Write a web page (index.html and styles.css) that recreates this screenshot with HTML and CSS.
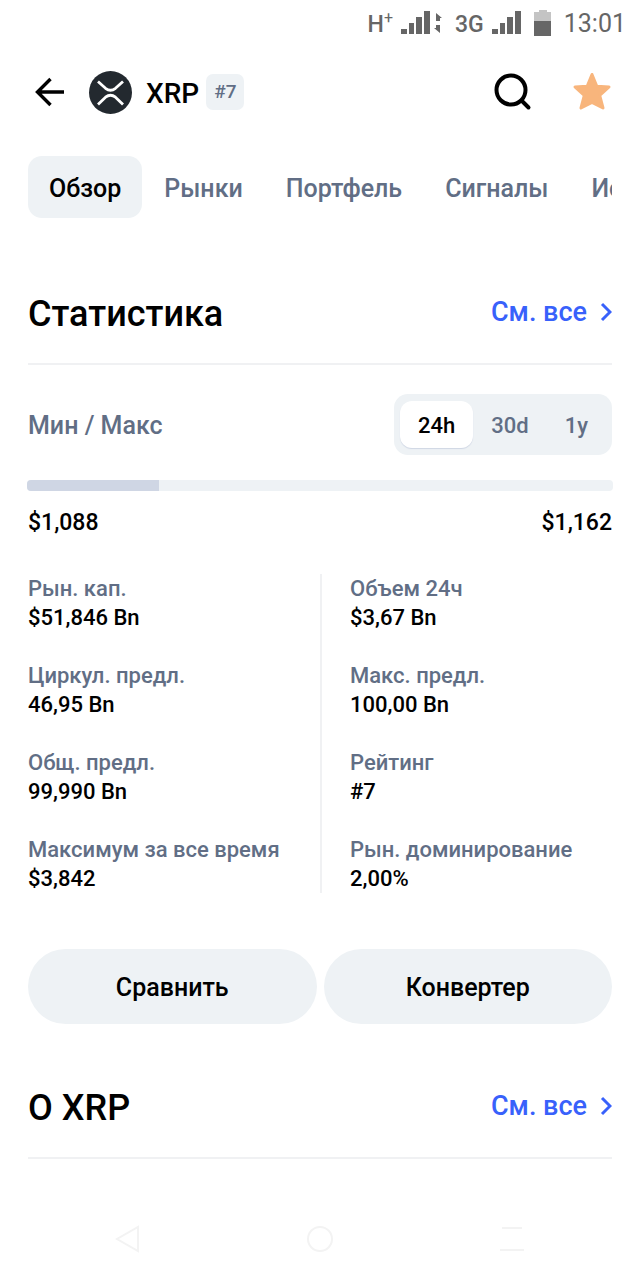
FILE: index.html
```html
<!DOCTYPE html>
<html lang="ru">
<head>
    <meta charset="UTF-8">
    <meta name="viewport" content="width=device-width, initial-scale=1.0">
    <title>XRP</title>
    <link rel="stylesheet" href="styles.css">
</head>
<body>
    <div class="statusBar">
        <span class="network">H<sup>+</sup></span>
        <svg class="signal" width="42" height="26" viewBox="0 0 42 26">
            <path d="M0 19h6v5H0zM8 13h5v11H8zM15 7h6v17h-6zM23 1h6v23h-6z"/>
            <path d="M35 3l6 5h-2v3h-4zM39 23l-6-5h2v-3h4z"/>
        </svg>
        <span class="network">3G</span>
        <svg class="signal" width="30" height="26" viewBox="0 0 30 26">
            <path d="M0 19h6v5H0zM8 13h5v11H8zM15 7h6v17h-6zM23 1h6v23h-6z"/>
        </svg>
        <svg class="battery" width="18" height="26" viewBox="0 0 18 26">
            <path fill="#c4c4c4" d="M5 0h8v2h4v9H0V2h5z"/>
            <path fill="#666" d="M0 11h17v15H0z"/>
        </svg>
        <span class="time">13:01</span>
    </div>
    <header class="header">
        <button class="iconButton" aria-label="Назад">
            <svg width="30" height="30" viewBox="0 0 30 30" fill="none" stroke="#000" stroke-width="3.4">
                <path d="M29 15H3M15.500 2L2.500 15l13 13"/>
            </svg>
        </button>
        <svg class="coinLogo" width="43" height="43" viewBox="0 0 43 43">
            <circle cx="21.500" cy="21.500" r="21.500" fill="#23292f"/>
            <path d="M9 10.500l7.500 6.800q5 4 10 0L34 10.500" fill="none" stroke="#fff" stroke-width="2.800"/>
            <path d="M9 33.500l7.500-7.300q5-4 10 0l7.500 7.300" fill="none" stroke="#fff" stroke-width="2.800"/>
        </svg>
        <h1 class="coinName">XRP</h1>
        <span class="rank">#7</span>
        <div class="headerActions">
            <button class="iconButton" aria-label="Поиск">
                <svg width="38" height="40" viewBox="0 0 38 40" fill="none" stroke="#000" stroke-width="4" stroke-linecap="round">
                    <circle cx="17" cy="18" r="14.500"/>
                    <path d="M28 29l6.500 6.500"/>
                </svg>
            </button>
            <button class="iconButton" aria-label="Избранное">
                <svg width="40" height="40" viewBox="0 0 40 40" fill="#f8b57c" stroke="#f8b57c" stroke-width="3" stroke-linejoin="round">
                    <path d="M20 2.500l4.800 11.700 12.200.8-9.300 8.500L31 36l-11-5.500L9 36l3.300-12.500L3 15l12.200-.8z"/>
                </svg>
            </button>
        </div>
    </header>
    <nav class="tabs">
        <button class="tab active">Обзор</button>
        <button class="tab">Рынки</button>
        <button class="tab">Портфель</button>
        <button class="tab">Сигналы</button>
        <button class="tab">История</button>
    </nav>
    <main class="content">
        <div class="sectionHead">
            <h2>Статистика</h2>
            <a href="#" class="seeAll">См. все
                <svg width="12" height="20" viewBox="0 0 12 20"><path d="M2 2l8 8-8 8"/></svg>
            </a>
        </div>
        <div class="rangeHead">
            <span class="rangeTitle">Мин / Макс</span>
            <div class="periods">
                <button class="period selected">24h</button>
                <button class="period">30d</button>
                <button class="period">1y</button>
            </div>
        </div>
        <div class="rangeBar"><div class="rangeFill" style="width:22.6%"></div></div>
        <div class="rangeValues">
            <span>$1,088</span><span>$1,162</span>
        </div>
        <div class="stats">
            <dl class="statsColumn">
                <div><dt>Рын. кап.</dt><dd>$51,846 Bn</dd></div>
                <div><dt>Циркул. предл.</dt><dd>46,95 Bn</dd></div>
                <div><dt>Общ. предл.</dt><dd>99,990 Bn</dd></div>
                <div><dt>Максимум за все время</dt><dd>$3,842</dd></div>
            </dl>
            <dl class="statsColumn">
                <div><dt>Объем 24ч</dt><dd>$3,67 Bn</dd></div>
                <div><dt>Макс. предл.</dt><dd>100,00 Bn</dd></div>
                <div><dt>Рейтинг</dt><dd>#7</dd></div>
                <div><dt>Рын. доминирование</dt><dd>2,00%</dd></div>
            </dl>
        </div>
        <div class="actions">
            <button class="action">Сравнить</button>
            <button class="action">Конвертер</button>
        </div>
        <div class="sectionHead">
            <h2>О XRP</h2>
            <a href="#" class="seeAll">См. все
                <svg width="12" height="20" viewBox="0 0 12 20"><path d="M2 2l8 8-8 8"/></svg>
            </a>
        </div>
    </main>
    <div class="systemNav">
        <svg width="28" height="28" viewBox="0 0 28 28"><path d="M24 2v24L3 14z"/></svg>
        <svg width="28" height="28" viewBox="0 0 28 28"><circle cx="14" cy="14" r="12"/></svg>
        <svg width="28" height="28" viewBox="0 0 28 28"><path d="M4 3h20M2 25h24"/></svg>
    </div>
</body>
</html>
```
FILE: styles.css
```css
* {
    box-sizing: border-box;
}
body {
    margin: 0;
    background: #fff;
    color: #000;
    font-family: Roboto, "Liberation Sans", sans-serif;
    font-weight: 500;
}
button {
    border: none;
    padding: 0;
    background: none;
    color: inherit;
    font: inherit;
    cursor: pointer;
}
svg {
    display: block;
    flex: none;
}

/* status bar */
.statusBar {
    display: flex;
    justify-content: flex-end;
    align-items: center;
    height: 46px;
    padding-right: 14px;
    color: #666;
}
.network {
    font-size: 23px;
    line-height: 28px;
    padding-top: 4px;
}
.network sup {
    font-size: 16px;
    font-weight: 400;
    line-height: 0;
}
.signal {
    margin: 0 12px 0 8px;
    fill: #666;
}
.battery {
    margin-right: 12px;
}
.time {
    font-size: 25px;
    font-weight: 400;
}

/* header */
.header {
    display: flex;
    align-items: center;
    height: 92px;
    padding: 0 28px 0 35px;
}
.coinLogo {
    margin: 0 14px 0 24px;
}
.coinName {
    margin: 0;
    padding-top: 2px;
    font-size: 28px;
    font-weight: 500;
}
.rank {
    margin-left: 7px;
    padding: 0 8px;
    border-radius: 7px;
    background: #eef2f5;
    color: #616e85;
    font-size: 19px;
    line-height: 36px;
}
.headerActions {
    display: flex;
    align-items: center;
    gap: 40px;
    margin-left: auto;
}

/* tabs */
.tabs {
    display: flex;
    gap: 1px;
    margin: 18px 28px 0;
    overflow: hidden;
}
.tab {
    flex: none;
    height: 62px;
    padding: 2px 21px 0;
    border-radius: 14px;
    color: #616e85;
    font-size: 25px;
}
.tab.active {
    background: #eef2f5;
    color: #000;
}

.content {
    padding: 52px 28px 0;
}
.sectionHead {
    display: flex;
    justify-content: space-between;
    align-items: center;
    height: 95px;
    padding-bottom: 8px;
    border-bottom: 2px solid #f0f1f3;
}
.sectionHead h2 {
    margin: 0;
    padding-top: 2px;
    font-size: 36px;
    font-weight: 500;
}
.seeAll {
    display: flex;
    align-items: center;
    gap: 13px;
    padding-bottom: 2px;
    color: #3861fb;
    font-size: 27px;
    text-decoration: none;
}
.seeAll svg {
    fill: none;
    stroke: #3861fb;
    stroke-width: 3;
}

/* min / max */
.rangeHead {
    display: flex;
    justify-content: space-between;
    align-items: center;
    margin-top: 29px;
    color: #616e85;
}
.rangeTitle {
    padding-top: 2px;
    font-size: 25px;
}
.periods {
    display: flex;
    padding: 7px 6px;
    border-radius: 14px;
    background: #eef2f5;
}
.period {
    height: 47px;
    padding: 2px 18px 0;
    border-radius: 12px;
    font-size: 22px;
}
.period.selected {
    background: #fff;
    color: #000;
    box-shadow: 0 1px 1px #cfd6e4;
}
.rangeBar {
    height: 11px;
    margin: 25px -1px 0;
    border-radius: 4px;
    background: #eef2f5;
    overflow: hidden;
}
.rangeFill {
    height: 100%;
    background: #cfd6e4;
}
.rangeValues {
    display: flex;
    justify-content: space-between;
    margin-top: 17px;
    font-size: 23px;
    line-height: 29px;
}

/* stats */
.stats {
    display: grid;
    grid-template-columns: 1fr 1fr;
    margin-top: 37px;
}
.statsColumn {
    display: flex;
    flex-direction: column;
    gap: 29px;
    margin: 0;
    font-size: 22px;
    line-height: 29px;
}
.statsColumn + .statsColumn {
    padding-left: 28px;
    border-left: 2px solid #f0f1f3;
}
.statsColumn dt {
    color: #616e85;
}
.statsColumn dd {
    margin: 0;
}

.actions {
    display: flex;
    gap: 7px;
    margin: 56px 0 40px;
}
.action {
    flex: 1;
    height: 75px;
    padding-top: 2px;
    border-radius: 38px;
    background: #eef2f5;
    font-size: 25px;
}

/* system buttons */
.systemNav {
    display: flex;
    justify-content: space-around;
    padding: 66px 32px 26px;
}
.systemNav svg {
    fill: none;
    stroke: #f3f3f3;
    stroke-width: 2;
}
```
